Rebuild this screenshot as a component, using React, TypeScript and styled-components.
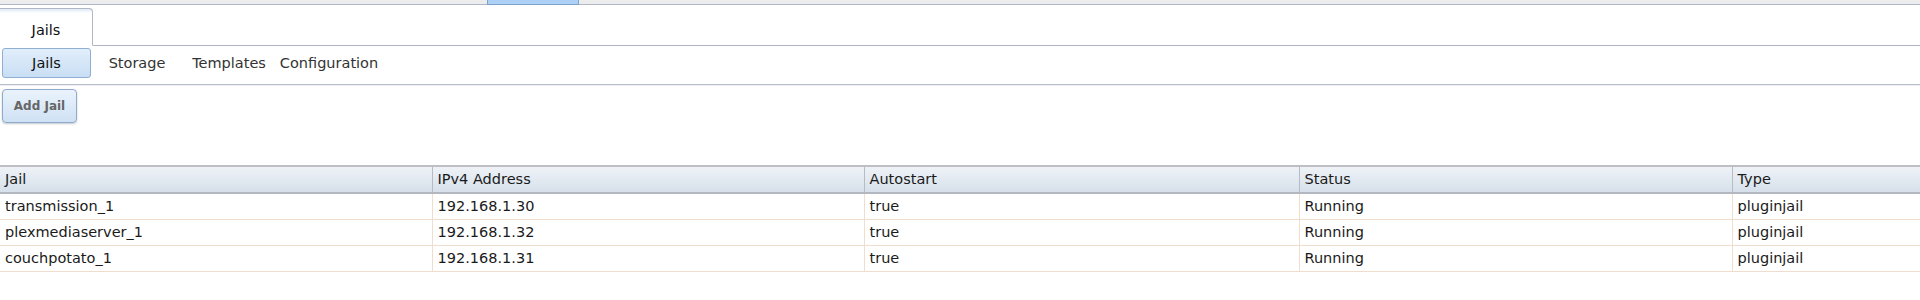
import React, { FC } from 'react'
import styled, { createGlobalStyle } from 'styled-components'

const GlobalStyle = createGlobalStyle`
  html, body {
    margin: 0;
    padding: 0;
    background: #fff;
    overflow: hidden;
  }
  body {
    font-family: "DejaVu Sans", Verdana, sans-serif;
    font-size: 14.5px;
    color: #1a1a1a;
  }
`

const TopStrip = styled.div`
  height: 4px;
  background: #ececec;
  border-bottom: 1px solid #b2b7c5;
  padding-left: 487px;
  display: flex;
`

const TopActive = styled.div`
  width: 90px;
  height: 4px;
  background: #acd0f6;
  border: 1px solid #7ea3cb;
  border-top: none;
  margin-bottom: -1px;
`

const TabBar = styled.div`
  display: flex;
  padding-top: 3px;
  border-bottom: 1px solid #afb5c4;
`

const Tab = styled.div`
  width: 93px;
  height: 38px;
  margin-bottom: -1px;
  border: 1px solid #b1b7c5;
  border-bottom: 1px solid #fff;
  border-left: none;
  border-radius: 0 4px 0 0;
  background: linear-gradient(#dde9f6 0, #fff 4px, #fff 100%);
  display: flex;
  align-items: center;
  justify-content: center;
  padding-top: 5px;
  box-sizing: border-box;
  color: #111;
`

const SubBar = styled.div`
  display: flex;
  align-items: center;
  height: 39px;
  padding: 0 2px 4px;
  box-sizing: border-box;
  border-bottom: 1px solid #b7bcc8;
  box-shadow: 0 1px 0 #eef0f4;
`

const SubTab = styled.div<{ $active?: boolean; $width: number }>`
  height: 30px;
  width: ${p => p.$width}px;
  box-sizing: border-box;
  display: flex;
  align-items: center;
  justify-content: center;
  color: ${p => (p.$active ? '#111' : '#333')};
  border-radius: 3px;
  border: 1px solid ${p => (p.$active ? '#8eaed3' : 'transparent')};
  background: ${p => (p.$active ? 'linear-gradient(#e1eefb, #c9def4)' : 'transparent')};
`

const Toolbar = styled.div`
  padding: 4px 2px 0;
  height: 80px;
  box-sizing: border-box;
`

const AddButton = styled.button`
  width: 75px;
  height: 34px;
  border: 1px solid #8ea9ca;
  border-radius: 4px;
  background: linear-gradient(#eaf3fc, #cfe1f4);
  box-shadow: 0 1px 2px rgba(80, 100, 130, 0.35);
  font-family: "DejaVu Sans", Verdana, sans-serif;
  font-weight: bold;
  font-size: 12px;
  color: #666;
  padding: 0;
`

const Table = styled.table`
  border-collapse: collapse;
  table-layout: fixed;
  width: 2165px;
`

const HeadCell = styled.th`
  height: 27px;
  box-sizing: border-box;
  text-align: left;
  font-weight: normal;
  padding: 0 5px 1px;
  color: #1a1a1a;
  background: linear-gradient(#eef2f7, #d6e0ea);
  border-top: 2px solid #bcc0c6;
  border-bottom: 2px solid #b3b8c0;
  border-right: 1px solid #b7bbc2;
`

const Cell = styled.td`
  height: 26px;
  box-sizing: border-box;
  padding: 0 5px 1px;
  border-bottom: 1px solid #f1ddcb;
  border-right: 1px solid #f1ddcb;
  white-space: nowrap;
  overflow: hidden;
`

interface Jail {
  name: string
  ip: string
  autostart: string
  status: string
  type: string
}

const jails: Jail[] = [
  { name: 'transmission_1', ip: '192.168.1.30', autostart: 'true', status: 'Running', type: 'pluginjail' },
  { name: 'plexmediaserver_1', ip: '192.168.1.32', autostart: 'true', status: 'Running', type: 'pluginjail' },
  { name: 'couchpotato_1', ip: '192.168.1.31', autostart: 'true', status: 'Running', type: 'pluginjail' },
]

const columns = ['Jail', 'IPv4 Address', 'Autostart', 'Status', 'Type']
const widths = [432, 432, 435, 433, 433]

const App: FC = () => {
  return (
    <>
      <GlobalStyle />
      <TopStrip>
        <TopActive />
      </TopStrip>
      <TabBar>
        <Tab>Jails</Tab>
      </TabBar>
      <SubBar>
        <SubTab $active $width={89}>Jails</SubTab>
        <SubTab $width={92}>Storage</SubTab>
        <SubTab $width={92}>Templates</SubTab>
        <SubTab $width={108}>Configuration</SubTab>
      </SubBar>
      <Toolbar>
        <AddButton>Add Jail</AddButton>
      </Toolbar>
      <Table>
        <colgroup>
          {widths.map((w, i) => (
            <col key={i} style={{ width: w }} />
          ))}
        </colgroup>
        <thead>
          <tr>
            {columns.map(c => (
              <HeadCell key={c}>{c}</HeadCell>
            ))}
          </tr>
        </thead>
        <tbody>
          {jails.map(j => (
            <tr key={j.name}>
              <Cell>{j.name}</Cell>
              <Cell>{j.ip}</Cell>
              <Cell>{j.autostart}</Cell>
              <Cell>{j.status}</Cell>
              <Cell>{j.type}</Cell>
            </tr>
          ))}
        </tbody>
      </Table>
    </>
  )
}

export default App
